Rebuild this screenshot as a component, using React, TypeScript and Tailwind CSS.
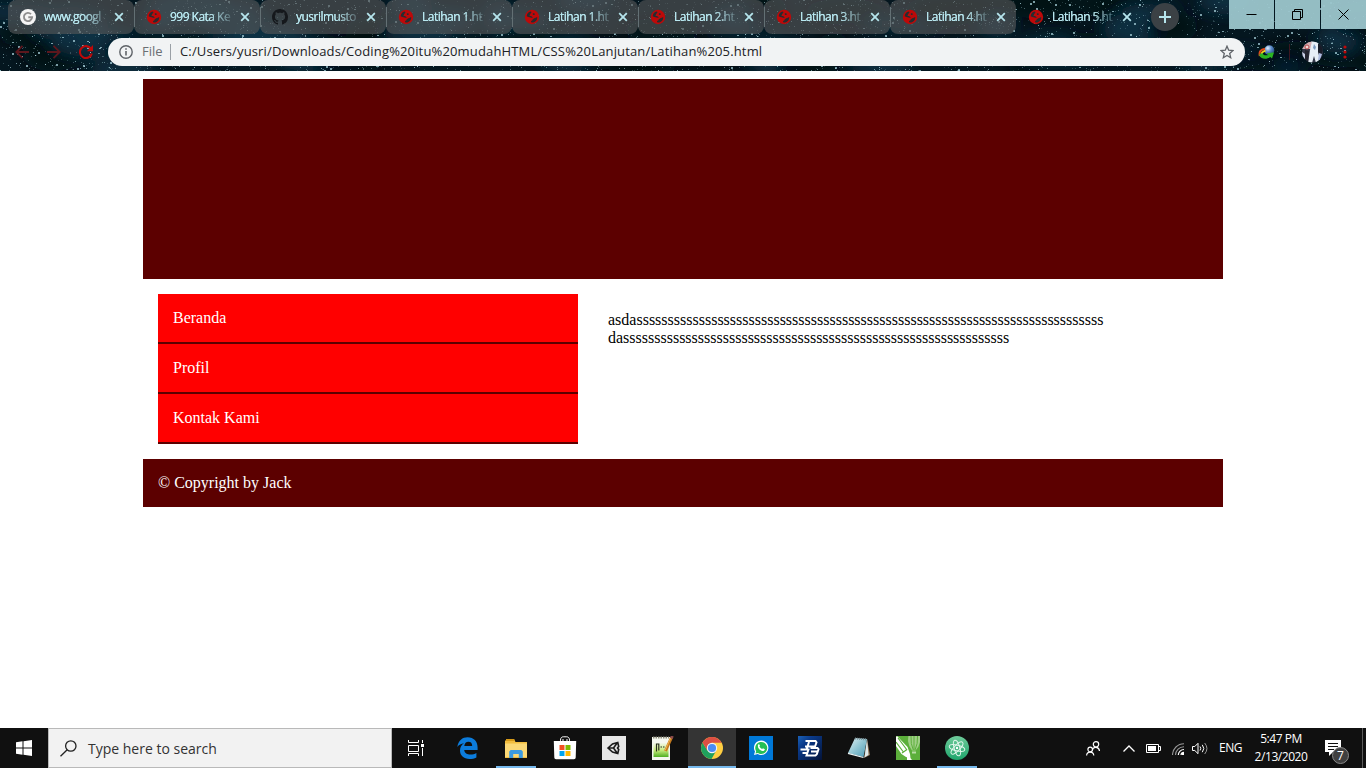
import React from "react";

const UI = "font-['Open_Sans','Noto_Sans',sans-serif]";

function makeRandom(seed: number) {
  let s = seed;
  return () => {
    s = (s * 1664525 + 1013904223) % 4294967296;
    return s / 4294967296;
  };
}

const rand = makeRandom(77);
const stars = Array.from({ length: 3600 }, () => {
  const big = rand() > 0.93;
  return {
    x: Math.floor(rand() * 1366),
    y: Math.floor(rand() * 71),
    w: big ? 2 : 1,
    h: big && rand() > 0.4 ? 2 : 1,
    o: big ? 0.72 : 0.15 + rand() * rand() * 0.8,
  };
});
const clouds = Array.from({ length: 64 }, (_, i) => ({
  x: i * 22 + rand() * 20,
  y: rand() * 71,
  rx: 16 + rand() * 32,
  ry: 6 + rand() * 14,
  dark: rand() > 0.5,
}));

function Starfield() {
  return (
    <svg className="absolute inset-0 h-full w-full" viewBox="0 0 1366 71">
      <defs>
        <filter id="soft" x="-50%" y="-50%" width="200%" height="200%">
          <feGaussianBlur stdDeviation="7" />
        </filter>
      </defs>
      <rect width="1366" height="71" fill="#04161f" />
      <g filter="url(#soft)">
        {clouds.map((c, i) => (
          <ellipse key={i} cx={c.x} cy={c.y} rx={c.rx} ry={c.ry} fill={c.dark ? "#010a12" : "#0b3649"} opacity="0.75" />
        ))}
      </g>
      <g fill="#a9d3dc" shapeRendering="crispEdges">
        {stars.map((s, i) => (
          <rect key={i} x={s.x} y={s.y} width={s.w} height={s.h} opacity={s.o} />
        ))}
      </g>
    </svg>
  );
}

function Globe() {
  return (
    <svg className="size-4 shrink-0" viewBox="0 0 16 16">
      <circle cx="8" cy="8" r="7.2" fill="#bd0909" />
      <g fill="#262c30">
        <path d="M2.700 7.200C2.800 4.600 4.500 3 6.700 2.500c.9.300.9 1.200.2 1.700-1 .6-.7 1.200-1.200 1.700-.5.600.1 1.100 1 1.200 1.100.1 1.200 1 2.100 1.300-.7.600-1.600.3-2.300 0-1.100-.4-2.400-.3-3.800-1.200z" />
        <path d="M13.300 8.200c0 2.700-1.700 4.700-4 5.200-.8.200-1.500.1-2.100-.1-.5-1 .1-1.400.9-1.700.6-.2.4-1 .9-1.500.7-.6 1.800-.3 2.300-1.100.4-.6 1.200-.9 2-.8z" />
        <path d="M9.300 4.300c.9-.1 1.500.3 1.500 1s-.8 1-1.500.6-.7-1.400 0-1.600z" />
      </g>
    </svg>
  );
}

function GoogleG() {
  return (
    <svg className="size-4 shrink-0" viewBox="0 0 16 16">
      <circle cx="8" cy="8" r="8" fill="#f5f5f5" />
      <path d="M11 5.200A4.100 4.100 0 1 0 12.100 8.300H8.300" fill="none" stroke="#8e8e8e" strokeWidth="1.900" />
    </svg>
  );
}

function Github() {
  return (
    <svg className="size-4 shrink-0" viewBox="0 0 16 16" fill="#15181c">
      <path d="M8 0C3.580 0 0 3.580 0 8c0 3.540 2.290 6.530 5.470 7.590.4.070.55-.17.55-.38 0-.19-.01-.82-.01-1.490-2.010.37-2.530-.49-2.690-.94-.09-.23-.48-.94-.82-1.130-.28-.15-.68-.52-.01-.53.63-.01 1.080.58 1.230.82.72 1.210 1.870.87 2.330.66.07-.52.28-.87.51-1.070-1.780-.2-3.640-.89-3.640-3.950 0-.87.31-1.590.82-2.150-.08-.2-.36-1.020.08-2.120 0 0 .67-.21 2.200.82.64-.18 1.320-.27 2-.27s1.360.09 2 .27c1.530-1.040 2.200-.82 2.200-.82.44 1.100.16 1.920.08 2.120.51.56.82 1.270.82 2.150 0 3.070-1.870 3.750-3.650 3.950.29.25.54.73.54 1.480 0 1.070-.01 1.930-.01 2.200 0 .21.15.46.55.38A8.010 8.010 0 0 0 16 8c0-4.420-3.580-8-8-8z" />
    </svg>
  );
}

const tabs = [
  { title: "www.googl", icon: <GoogleG /> },
  { title: "999 Kata Ke", icon: <Globe /> },
  { title: "yusrilmusto", icon: <Github /> },
  { title: "Latihan 1.ht", icon: <Globe /> },
  { title: "Latihan 1.ht", icon: <Globe /> },
  { title: "Latihan 2.ht", icon: <Globe /> },
  { title: "Latihan 3.ht", icon: <Globe /> },
  { title: "Latihan 4.ht", icon: <Globe /> },
  { title: "Latihan 5.ht", icon: <Globe /> },
];

function Tab({ title, icon, active, divider }: { title: string; icon: React.ReactNode; active: boolean; divider: boolean }) {
  return (
    <div
      className={
        active
          ? "relative flex h-[34px] w-[126px] items-center pl-3"
          : "relative flex h-[34px] w-[126px] items-center rounded-lg bg-[#545658]/65 pl-3"
      }
    >
      {icon}
      <span className="ml-2 w-[64px] whitespace-nowrap text-[12px] leading-4 tracking-[-0.52px] text-[#b9e9f1] [text-shadow:0_0_0.5px_#b9e9f1] [mask-image:linear-gradient(to_right,black_62%,rgba(0,0,0,0.15)_98%)]">
        {title}
      </span>
      <svg className="ml-[6px] size-[10px]" viewBox="0 0 10 10">
        <path d="M1.200 1.200l7.600 7.600M8.800 1.200L1.200 8.800" stroke="#b5e4ec" strokeWidth="1.800" />
      </svg>
      {divider && <span className="absolute -right-px top-[7px] h-5 w-px bg-[#7fa0a8]" />}
    </div>
  );
}

function BrowserChrome() {
  return (
    <header className={`relative h-[71px] shrink-0 overflow-hidden ${UI}`}>
      <Starfield />
      <div className="relative flex h-[38px] items-start">
        <div className="flex pl-2">
          {tabs.map((t, i) => (
            <Tab key={i} title={t.title} icon={t.icon} active={i === 8} divider={i < 7} />
          ))}
        </div>
        <div className="ml-[9px] mt-[3px] flex size-7 items-center justify-center rounded-full bg-[#3b4145]">
          <svg className="size-3" viewBox="0 0 12 12">
            <path d="M6 0v12M0 6h12" stroke="#b5e4ec" strokeWidth="2" />
          </svg>
        </div>
        <div className="ml-auto flex h-[29px] gap-px">
          <div className="flex w-[45px] items-center justify-center bg-[#9cc6cc]/95">
            <svg className="size-[11px]" viewBox="0 0 11 11"><path d="M.5 5.500h10" stroke="#000" /></svg>
          </div>
          <div className="flex w-[45px] items-center justify-center bg-[#9cc6cc]/95">
            <svg className="size-[11px]" viewBox="0 0 11 11" fill="none" stroke="#000">
              <path d="M.5 2.500h8v8h-8zM2.500 2.500v-2h8v8h-2" />
            </svg>
          </div>
          <div className="flex w-[45px] items-center justify-center bg-[#9cc6cc]/95">
            <svg className="size-[11px]" viewBox="0 0 11 11"><path d="M.5.5l10 10M10.500.5l-10 10" stroke="#000" /></svg>
          </div>
        </div>
      </div>
      <div className="relative flex h-7 items-center">
        <div className="flex w-[108px] items-center gap-[18px] pl-[15px]">
          <svg className="size-[14px]" viewBox="0 0 14 14" fill="none" stroke="#5c171d" strokeWidth="1.900">
            <path d="M14 7H1.500M7.500 .8L1.300 7l6.200 6.200" />
          </svg>
          <svg className="size-[14px]" viewBox="0 0 14 14" fill="none" stroke="#5c171d" strokeWidth="1.900">
            <path d="M0 7h12.500M6.500 .8L12.700 7l-6.200 6.200" />
          </svg>
          <svg className="size-[14px]" viewBox="0 0 14 14">
            <path d="M12 3.800A6 6 0 1 0 12.800 8.500" fill="none" stroke="#bd0909" strokeWidth="2.100" />
            <path d="M14 0v6.200H7.800z" fill="#bd0909" />
          </svg>
        </div>
        <div className="flex h-7 w-[1137px] items-center rounded-full bg-[#f1f3f4] pl-[11px] pr-[11px]">
          <svg className="size-[14px]" viewBox="0 0 14 14">
            <circle cx="7" cy="7" r="6.200" fill="none" stroke="#5f6368" strokeWidth="1.400" />
            <path d="M7 6v4.500M7 3.300v1.500" stroke="#5f6368" strokeWidth="1.600" />
          </svg>
          <span className="ml-[9px] w-[28px] text-[13px] text-[#6b6f73]">File</span>
          <span className="h-4 w-px bg-[#9aa0a6]" />
          <span className="ml-[9px] whitespace-nowrap text-[13px] tracking-[0.15px] text-[#202124]">
            C:/Users/yusri/Downloads/Coding%20itu%20mudahHTML/CSS%20Lanjutan/Latihan%205.html
          </span>
          <svg className="ml-auto size-[14px]" viewBox="0 0 14 14" fill="none" stroke="#5f6368" strokeWidth="1.300">
            <path d="M7 1.200l1.700 4 4.300.4-3.300 2.800 1 4.300L7 10.400l-3.700 2.300 1-4.300L1 5.600l4.300-.4z" />
          </svg>
        </div>
        <svg className="ml-[13px] h-4 w-[17px]" viewBox="0 0 17 16">
          <defs>
            <radialGradient id="orb" cx=".35" cy=".3" r=".8">
              <stop offset="0" stopColor="#e4f0ff" />
              <stop offset=".45" stopColor="#5d8cc9" />
              <stop offset="1" stopColor="#173c73" />
            </radialGradient>
          </defs>
          <circle cx="11.300" cy="6.200" r="5" fill="url(#orb)" />
          <path d="M7 4.800C2.500 5.500.8 8 1.800 12" fill="none" stroke="#e04a1c" strokeWidth="2" />
          <path d="M7.500 6.800C4 7.500 3 9.500 3.800 12" fill="none" stroke="#f2cf1d" strokeWidth="2" />
          <path d="M1 10.500c1.500 5 7.500 5.300 11.300 2.500l1.700 1.500 2-6-7.500.7 2 1.500C8 11.800 5 11.500 4.500 9z" fill="#2cb422" />
        </svg>
        <span className="ml-[4px] h-4 w-px bg-[#3c1620]/0" />
        <span className="ml-[9px] h-4 w-px bg-[#3c1620]" />
        <svg className="ml-[12px] h-[22px] w-[21px]" viewBox="0 0 21 22">
          <defs><clipPath id="face"><circle cx="10.500" cy="11" r="10.500" /></clipPath></defs>
          <g clipPath="url(#face)">
            <rect width="21" height="22" fill="#343848" />
            <path d="M0 0h10v8H0z" fill="#d3aeb2" />
            <circle cx="5" cy="6" r="2" fill="#f3dbd6" stroke="#b7494c" />
            <path d="M10 0h6l2 9-1 13h-3l-2-7-2 7H6l2-13z" fill="#e8eef6" />
            <path d="M3 9l4 1-1 12H2z" fill="#23232e" />
            <path d="M12 3l2 3-1 3-2-2z" fill="#7d9abf" />
            <path d="M16 3h3l2 6-3 9-2-7z" fill="#181b27" />
            <path d="M0 11l3 2v7H0z" fill="#c9cfe5" />
            <path d="M17 12l3 1-2 6h-2z" fill="#aebbe0" />
          </g>
        </svg>
        <svg className="ml-[20px] h-[14px] w-1" viewBox="0 0 4 14" fill="#bd0909">
          <circle cx="2" cy="2" r="1.600" /><circle cx="2" cy="7" r="1.600" /><circle cx="2" cy="12" r="1.600" />
        </svg>
      </div>
    </header>
  );
}

function WebPage() {
  return (
    <main className="flex-1 bg-white pt-2 font-['Liberation_Serif',serif] text-[16px] leading-[18px]">
      <div className="mx-auto w-[1080px]">
        <div className="h-[200px] bg-[#5c0000]" />
        <div className="flex h-[180px] items-start p-[15px]">
          <nav className="w-[420px] text-white">
            {["Beranda", "Profil", "Kontak Kami"].map((label) => (
              <div key={label} className="h-[50px] border-b-2 border-[#5c0000] bg-[#ff0000] p-[15px]">{label}</div>
            ))}
          </nav>
          <p className="ml-[30px] mt-[17px] text-black">
            {"asda" + "s".repeat(75)}
            <br />
            {"da" + "s".repeat(62)}
          </p>
        </div>
        <footer className="h-12 bg-[#5c0000] p-[15px] text-white">© Copyright by Jack</footer>
      </div>
    </main>
  );
}

const apps: { icon: React.ReactNode; state?: "open" | "active" }[] = [
  {
    icon: (
      <svg className="h-[22px] w-[21px]" viewBox="0 0 21 22">
        <path d="M.3 10C1.300 3.500 5.500.3 10.600.3 16.800.3 20.600 4.500 20.600 10.400V13H7.200c.2 3 3 4.600 6.200 4.600 2.200 0 4.300-.6 6-1.700v4.500c-2 1-4.300 1.500-6.900 1.500C6.700 21.900 3 18.300 3 13.400c0-3 1.500-5.700 4-7.200C4.200 6.500 1.800 7.800.3 10zM7.300 9h7.900c0-2.700-1.300-4.200-3.800-4.200-2.300 0-3.800 1.500-4.100 4.200z" fill="#0c7cdc" />
      </svg>
    ),
  },
  {
    state: "open",
    icon: (
      <svg className="h-[19px] w-[22px]" viewBox="0 0 22 19">
        <path d="M0 1.500h1.500V1h8l1 2H22v16H0z" fill="#f2bd3f" />
        <path d="M1 0h8.500v2H1z" fill="#d79a18" />
        <path d="M0 4.500h22V18H0z" fill="#fbd876" />
        <path d="M4.200 19v-6.500l1.500-1.500h10.600l1.500 1.500V19h-4v-4H8.200v4z" fill="#3b9ae0" />
      </svg>
    ),
  },
  {
    icon: (
      <svg className="h-[24px] w-[24px]" viewBox="0 0 24 24">
        <path d="M7.500 7V4.200C7.500 1.600 9 .8 10.300.8h3.400c1.500 0 2.800 1 2.800 3.400V7M10 5V3M14 5V3" fill="none" stroke="#fff" />
        <path d="M.8 5h22.400l-.5 16.500q0 1.700-1.700 1.700H3q-1.700 0-1.700-1.700z" fill="#fff" />
        <path d="M6.500 9h5v5h-5z" fill="#f25022" />
        <path d="M12.500 9h5v5h-5z" fill="#7fba00" />
        <path d="M6.500 15h5v5h-5z" fill="#00a4ef" />
        <path d="M12.500 15h5v5h-5z" fill="#ffb900" />
      </svg>
    ),
  },
  {
    icon: (
      <svg className="size-6" viewBox="0 0 24 24">
        <rect width="24" height="24" fill="#e7e7e7" />
        <path d="M6 12l4.500-4 5.300-1.500.9 4L15.500 12l1.200 1.500-.9 4-5.300-1.500zM6 12h5.500m0 0l4-5.500M11.500 12l4 5.500" fill="none" stroke="#1b1b1b" strokeWidth="1.600" />
      </svg>
    ),
  },
  {
    icon: (
      <svg className="size-6" viewBox="0 0 24 24">
        <defs>
          <linearGradient id="sheet" x1="0" y1="0" x2="0" y2="1">
            <stop offset=".15" stopColor="#f6f8f0" /><stop offset=".6" stopColor="#c9ec7d" /><stop offset="1" stopColor="#4fae22" />
          </linearGradient>
        </defs>
        <path d="M1 1h18v23H1z" fill="#f3f6ee" />
        <path d="M2.500 4h15v17h-15z" fill="url(#sheet)" />
        <path d="M2 1.500h16" stroke="#8b8b7a" strokeWidth="2" strokeDasharray="1.500 1" />
        <path d="M5.500 7.500v8M5.500 8h2.300v6.500M9.500 11h1.500M12 11h1.500" fill="none" stroke="#28301c" strokeWidth="1.200" />
        <path d="M20.500 1.500L14.500 15" stroke="#c47a1e" strokeWidth="3" />
        <path d="M20 1.300L14 14.500" stroke="#f5b84e" />
        <path d="M21.300 0l-1 2.500" stroke="#8b4b4b" strokeWidth="3" />
      </svg>
    ),
  },
  {
    state: "active",
    icon: (
      <svg className="size-[22px]" viewBox="0 0 22 22">
        <circle cx="11" cy="11" r="11" fill="#ffce42" />
        <path d="M1.500 5.500A11 11 0 0 0 10.500 22L15.300 13.500 6.500 13.500z" fill="#1fa15d" />
        <path d="M11 5.800h9.700l-.2-.3A11 11 0 0 0 1.500 5.500L6.300 13.500z" fill="#dd4f43" />
        <circle cx="11" cy="11" r="5.200" fill="#f4f4f4" />
        <circle cx="11" cy="11" r="4.100" fill="#4b8bf4" />
      </svg>
    ),
  },
  {
    icon: (
      <svg className="size-6" viewBox="0 0 24 24">
        <rect width="24" height="24" fill="#0078d7" />
        <path d="M5 19l1-3.600A7.200 7.200 0 1 1 8.700 18z" fill="#fff" />
        <path d="M6.500 17.500l.7-2.300A6 6 0 1 1 9 17z" fill="#25c055" />
        <path d="M9.200 8.500c.8-.8 1.400 0 1.800 1.200l-.6.9c.7 1.300 1.500 2 2.700 2.400l.9-.8 1.900 1c-.3 1.600-1.500 2-2.800 1.700-2.500-.5-5.200-3.700-3.900-6.400z" fill="#fff" />
      </svg>
    ),
  },
  {
    icon: (
      <svg className="size-6" viewBox="0 0 24 24">
        <defs>
          <linearGradient id="navy" x1="0" y1="0" x2="1" y2="1">
            <stop offset="0" stopColor="#1b62b8" /><stop offset=".3" stopColor="#0a3a8a" /><stop offset="1" stopColor="#041338" />
          </linearGradient>
        </defs>
        <rect width="24" height="24" fill="url(#navy)" />
        <path d="M7.500 5h10l1 1.500-1.500 4H7M11 6l-2.500 7.500H2.500M12.500 12h7l1 1.300-1.700 5-1.300 1.200H8.500l2.300-7M4.500 17h4M13 15.500h6" fill="none" stroke="#fff" strokeWidth="2" />
      </svg>
    ),
  },
  {
    icon: (
      <svg className="size-6" viewBox="0 0 24 24">
        <defs>
          <linearGradient id="pad" x1="0" y1="0" x2="1" y2="1">
            <stop offset="0" stopColor="#e2f1f3" /><stop offset=".5" stopColor="#8fc5d2" /><stop offset="1" stopColor="#4c99b4" />
          </linearGradient>
        </defs>
        <path d="M20 3l3 16-6 3z" fill="#8f7658" />
        <path d="M20 3l1.500 16-4 2.500z" fill="#dfe9ea" />
        <path d="M8 2l12 1L16.500 21 1 17z" fill="url(#pad)" />
        <path d="M1 17.300l15.500 4.200" fill="none" stroke="#eef7f8" strokeWidth="1.200" />
        <path d="M8 2.500l12 1" stroke="#7d9298" strokeWidth="2" strokeDasharray="1 1" />
      </svg>
    ),
  },
  {
    icon: (
      <svg className="size-6" viewBox="0 0 24 24">
        <rect width="24" height="24" fill="#5caf3b" />
        <path d="M12.500 0h11.500v6q-1 5-4.500 8.500h-3.500Q12.500 10 12 5q0-3 .5-5z" fill="#9fcf86" />
        <path d="M15 0q-.5 8 2.300 14M18 0v14M21.500 0q.5 8-2.500 14" fill="none" stroke="#5caf3b" />
        <path d="M16 15.500h4v2h-4z" fill="#b8dca6" />
        <path d="M0 1l1-1 10.500 11 2.500 7 .5 4.500L10 21l-4.500-3L0 10z" fill="#fff" />
        <path d="M0 6l7 9.500M2 2l9 12M6 17l5-3.500" fill="none" stroke="#5caf3b" strokeWidth="1.200" />
        <path d="M11 18l5 6h-5z" fill="#fff" />
      </svg>
    ),
  },
  {
    state: "open",
    icon: (
      <svg className="size-6" viewBox="0 0 24 24">
        <defs>
          <linearGradient id="atom" x1="0" y1="0" x2="0" y2="1">
            <stop offset="0" stopColor="#6fcb9a" /><stop offset="1" stopColor="#1ea56c" />
          </linearGradient>
        </defs>
        <circle cx="12" cy="12" r="12" fill="url(#atom)" />
        <g fill="none" stroke="#e2f6ec" strokeWidth="1">
          <ellipse cx="12" cy="12" rx="8" ry="2.800" transform="rotate(14 12 12)" />
          <ellipse cx="12" cy="12" rx="8" ry="2.800" transform="rotate(74 12 12)" />
          <ellipse cx="12" cy="12" rx="8" ry="2.800" transform="rotate(134 12 12)" />
        </g>
        <circle cx="12" cy="12" r="1.200" fill="#fff" />
      </svg>
    ),
  },
];

function Taskbar() {
  return (
    <div className={`flex h-10 shrink-0 bg-[#101010] text-white ${UI}`}>
      <div className="flex w-12 items-center justify-center">
        <svg className="size-4" viewBox="0 0 16 16" fill="#fff">
          <path d="M0 2.200L6.500 1.300V7.500H0zM7.500 1.200L16 0v7.500H7.500zM0 8.500h6.500v6.200L0 13.800zM7.500 8.500H16V16l-8.500-1.200z" />
        </svg>
      </div>
      <div className="flex w-[344px] items-center border border-[#b9b9b9] bg-[#f2f2f2] pl-[11px]">
        <svg className="size-[17px]" viewBox="0 0 17 17" fill="none" stroke="#222" strokeWidth="1.300">
          <circle cx="10.800" cy="6" r="5.200" />
          <path d="M7.200 9.800L.5 16.300" />
        </svg>
        <span className="ml-[11px] text-[14px] text-[#333]">Type here to search</span>
      </div>
      <div className="flex w-[51px] items-center pl-4">
        <svg className="size-4" viewBox="0 0 16 16" fill="none" stroke="#fff">
          <path d="M.5 0v2.500h10V0M.5 5.500h10v6H.5zM.5 16v-2.500h10V16M14.500 0v3M14.500 8v8" />
          <path d="M13 4h3v3h-3z" fill="#fff" stroke="none" />
        </svg>
      </div>
      <div className="flex gap-px">
        {apps.map((a, i) => (
          <div
            key={i}
            className={
              a.state === "active"
                ? "relative flex w-12 items-center justify-center bg-[#343434]"
                : "relative flex w-12 items-center justify-center"
            }
          >
            {a.icon}
            {a.state === "active" && <span className="absolute bottom-0 left-0 h-[2px] w-12 bg-[#76b9ed]" />}
            {a.state === "open" && <span className="absolute bottom-0 left-1 h-[2px] w-10 bg-[#76b9ed]" />}
          </div>
        ))}
      </div>
      <div className="ml-auto flex items-center">
        <svg className="h-[15px] w-[14px]" viewBox="0 0 14 15" fill="none" stroke="#fff" strokeWidth="1.200">
          <circle cx="10" cy="3.300" r="2.700" />
          <path d="M6.500 8.500C7.300 5.500 13 5.300 13.500 10" />
          <circle cx="4.200" cy="8.500" r="2.300" />
          <path d="M.6 14.500c.3-4.500 6.800-4.500 7.200 0" />
        </svg>
        <svg className="ml-[23px] h-[7px] w-3" viewBox="0 0 12 7" fill="none" stroke="#fff" strokeWidth="1.300">
          <path d="M.5 6.500L6 1l5.500 5.500" />
        </svg>
        <svg className="ml-[11px] h-[9px] w-[15px]" viewBox="0 0 15 9">
          <path d="M.5.5h12v8H.5zM13 2.500h1.500v4H13" fill="none" stroke="#fff" />
          <path d="M2 2h8v5H2z" fill="#fff" />
        </svg>
        <svg className="ml-[11px] mt-[2px] h-3 w-3" viewBox="0 0 12 12" fill="none">
          <path d="M.5 12A11.500 11.500 0 0 1 12 .7M3.500 12A8.500 8.500 0 0 1 12 3.700" stroke="#999" strokeWidth="1.100" />
          <path d="M6.300 12A5.700 5.700 0 0 1 12 6.500M9 12a3 3 0 0 1 3-2.700" stroke="#fff" strokeWidth="1.200" />
          <path d="M10 10h2v2h-2z" fill="#fff" />
        </svg>
        <svg className="ml-2 h-[13px] w-[17px]" viewBox="0 0 17 13" fill="none" stroke="#fff">
          <path d="M.5 4.500h2.300L6 1.300v10.400L2.800 8.500H.5z" />
          <path d="M8 4.500q1.500 2 0 4M10.300 2.800q3 3.700 0 7.400" />
          <path d="M12.700 1q4.500 5.500 0 11" stroke="#999" />
        </svg>
        <span className="ml-[10px] w-6 whitespace-nowrap text-[12px] tracking-[-0.5px]">ENG</span>
        <div className="ml-[6px] flex w-[64px] flex-col items-center whitespace-nowrap text-[12px] leading-[18px] tracking-[-0.45px]">
          <span>5:47 PM</span>
          <span>2/13/2020</span>
        </div>
        <div className="relative ml-[12px] h-10 w-[25px]">
          <svg className="absolute left-0 top-[12px] h-4 w-4" viewBox="0 0 16 16">
            <path d="M0 0h16v12H8l-4 4v-4H0z" fill="#fff" />
            <path d="M3 3.500h10M3 6.500h10M3 9.500h6" stroke="#101010" />
          </svg>
          <span className="absolute left-[7px] top-[19px] flex size-[17px] items-center justify-center rounded-full border border-[#8a8a8a] bg-[#404040] text-[12px] leading-none">
            7
          </span>
        </div>
        <span className="ml-[12px] mr-[3px] h-10 w-px bg-[#5a5a5a]" />
      </div>
    </div>
  );
}

export default function App() {
  return (
    <div className="flex h-[768px] w-[1366px] flex-col overflow-hidden bg-white">
      <BrowserChrome />
      <WebPage />
      <Taskbar />
    </div>
  );
}
